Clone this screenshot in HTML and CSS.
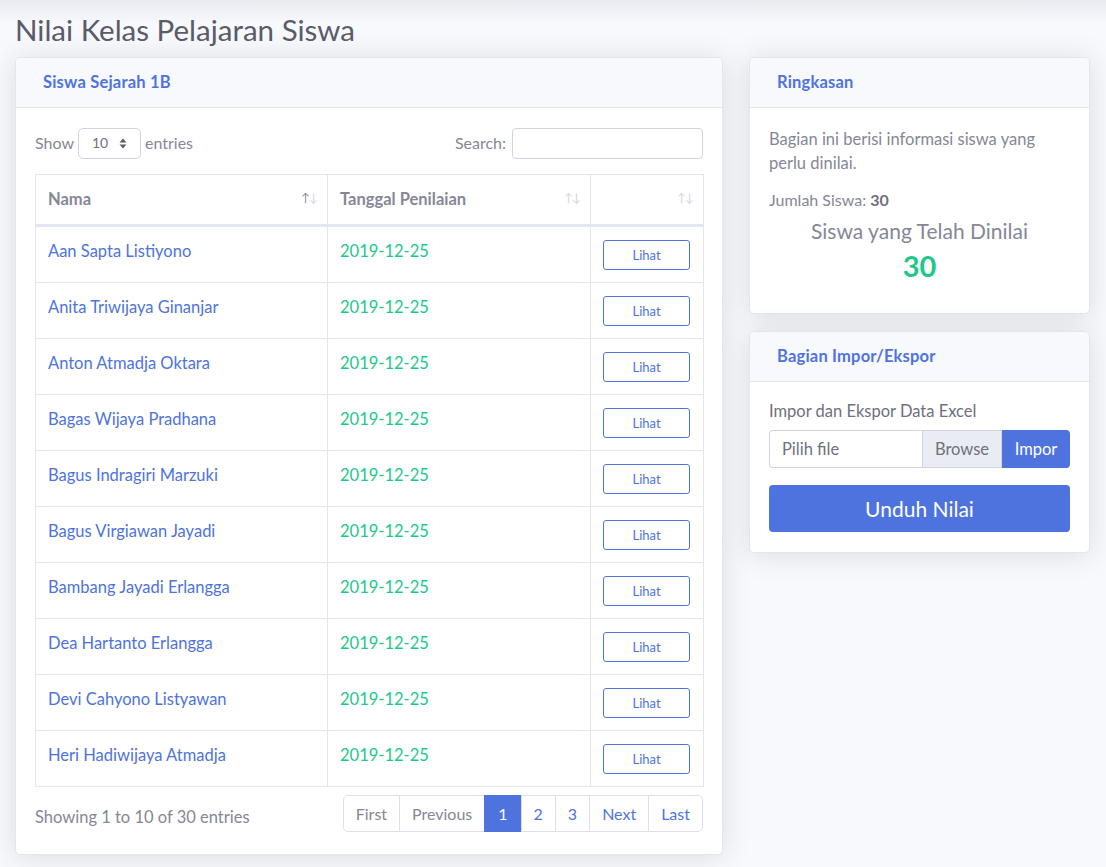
FILE: index.html
```html
<!DOCTYPE html>
<html lang="id">
<head>
<meta charset="utf-8">
<title>Nilai Kelas Pelajaran Siswa</title>
<link rel="stylesheet" href="styles.css">
</head>
<body>
<div class="page">
  <h1 class="page-title">Nilai Kelas Pelajaran Siswa</h1>
  <div class="layout">
    <div class="card">
      <div class="card-header"><h6>Siswa Sejarah 1B</h6></div>
      <div class="card-body">
        <div class="controls">
          <label class="length">Show
            <span class="select">10 <svg width="8" height="11" viewBox="0 0 8 11"><path d="M4 0.5 L7.5 4.5 H0.5 Z M4 10.5 L7.5 6.5 H0.5 Z" fill="#5a5c69"/></svg></span>
            entries</label>
          <label class="search">Search: <span class="search-input"></span></label>
        </div>
        <table class="table">
          <colgroup><col class="c1"><col class="c2"><col class="c3"></colgroup>
          <thead>
            <tr>
              <th>Nama<span class="sort"><span class="up on">↑</span><span class="dn">↓</span></span></th>
              <th>Tanggal Penilaian<span class="sort"><span class="up">↑</span><span class="dn">↓</span></span></th>
              <th><span class="sort"><span class="up">↑</span><span class="dn">↓</span></span></th>
            </tr>
          </thead>
          <tbody>
            <tr><td class="name">Aan Sapta Listiyono</td><td class="date">2019-12-25</td><td><button class="btn-lihat">Lihat</button></td></tr>
            <tr><td class="name">Anita Triwijaya Ginanjar</td><td class="date">2019-12-25</td><td><button class="btn-lihat">Lihat</button></td></tr>
            <tr><td class="name">Anton Atmadja Oktara</td><td class="date">2019-12-25</td><td><button class="btn-lihat">Lihat</button></td></tr>
            <tr><td class="name">Bagas Wijaya Pradhana</td><td class="date">2019-12-25</td><td><button class="btn-lihat">Lihat</button></td></tr>
            <tr><td class="name">Bagus Indragiri Marzuki</td><td class="date">2019-12-25</td><td><button class="btn-lihat">Lihat</button></td></tr>
            <tr><td class="name">Bagus Virgiawan Jayadi</td><td class="date">2019-12-25</td><td><button class="btn-lihat">Lihat</button></td></tr>
            <tr><td class="name">Bambang Jayadi Erlangga</td><td class="date">2019-12-25</td><td><button class="btn-lihat">Lihat</button></td></tr>
            <tr><td class="name">Dea Hartanto Erlangga</td><td class="date">2019-12-25</td><td><button class="btn-lihat">Lihat</button></td></tr>
            <tr><td class="name">Devi Cahyono Listyawan</td><td class="date">2019-12-25</td><td><button class="btn-lihat">Lihat</button></td></tr>
            <tr><td class="name">Heri Hadiwijaya Atmadja</td><td class="date">2019-12-25</td><td><button class="btn-lihat">Lihat</button></td></tr>
          </tbody>
        </table>
        <div class="table-footer">
          <div class="info">Showing 1 to 10 of 30 entries</div>
          <ul class="pagination">
            <li class="disabled">First</li>
            <li class="disabled">Previous</li>
            <li class="active">1</li>
            <li>2</li>
            <li>3</li>
            <li>Next</li>
            <li>Last</li>
          </ul>
        </div>
      </div>
    </div>

    <div class="side">
      <div class="card">
        <div class="card-header"><h6>Ringkasan</h6></div>
        <div class="card-body">
          <p class="desc">Bagian ini berisi informasi siswa yang perlu dinilai.</p>
          <p class="count">Jumlah Siswa: <b>30</b></p>
          <h5 class="graded-title">Siswa yang Telah Dinilai</h5>
          <div class="graded-num">30</div>
        </div>
      </div>
      <div class="card">
        <div class="card-header"><h6>Bagian Impor/Ekspor</h6></div>
        <div class="card-body body-import">
          <div class="import-label">Impor dan Ekspor Data Excel</div>
          <div class="input-group">
            <span class="file-name">Pilih file</span>
            <span class="file-browse">Browse</span>
            <span class="file-submit">Impor</span>
          </div>
          <button class="btn-download">Unduh Nilai</button>
        </div>
      </div>
    </div>
  </div>
</div>
</body>
</html>
```
FILE: styles.css
```css
* { box-sizing: border-box; }
html, body { margin: 0; }
body {
  font-family: Lato, "Noto Sans", sans-serif;
  font-size: 16px;
  line-height: 24px;
  color: #858796;
  background: linear-gradient(to bottom, #e9eaef 0px, #f8f9fc 24px) #f8f9fc;
  min-height: 867px;
}
.page { padding: 13px 16px 0 15px; }
.page-title {
  margin: 0 0 10px 0;
  font-size: 29.5px;
  line-height: 34px;
  font-weight: 400;
  color: #5a5c69;
}
.layout {
  display: grid;
  grid-template-columns: 708px 341px;
  gap: 26px;
  align-items: start;
}
.side { display: flex; flex-direction: column; gap: 17px; }
.card {
  background: #fff;
  border: 1px solid #e3e6f0;
  border-radius: 5px;
  box-shadow: 0 2px 28px 0 rgba(58, 59, 69, 0.15);
  overflow: hidden;
}
.card-header {
  background: #f8f9fc;
  border-bottom: 1px solid #e3e6f0;
  padding: 15px 20px 16px 27px;
}
.card-header h6 {
  margin: 0;
  font-size: 16.5px;
  line-height: 18px;
  font-weight: 700;
  color: #4e73df;
  letter-spacing: 0.2px;
}
.card-body { padding: 19px 19px 22px 19px; }

.controls {
  display: flex;
  justify-content: space-between;
  align-items: center;
  height: 32px;
}
.length, .search { display: flex; align-items: center; gap: 4px; font-size: 16px; }
.search { gap: 6px; }
.select {
  display: inline-flex;
  align-items: center;
  justify-content: space-between;
  width: 63px;
  height: 31px;
  padding: 0 13px 0 13px;
  border: 1px solid #d1d3e2;
  border-radius: 5px;
  font-size: 14px;
  color: #6e707e;
}
.search-input {
  display: inline-block;
  width: 191px;
  height: 31px;
  border: 1px solid #d1d3e2;
  border-radius: 4px;
}
.table {
  width: 100%;
  margin-top: 15px;
  border-collapse: collapse;
  table-layout: fixed;
  border: 1px solid #e3e6f0;
}
.c1 { width: 292px; }
.c2 { width: 263px; }
.c3 { width: 113px; }
.table th, .table td {
  border: 1px solid #e3e6f0;
  padding: 12px;
  vertical-align: top;
  text-align: left;
}
.table th {
  position: relative;
  font-weight: 700;
  font-size: 16.5px;
  color: #858796;
  border-bottom-width: 3px;
  padding-top: 12px;
  padding-bottom: 13px;
}
.sort {
  position: absolute;
  right: 10px;
  top: 11px;
  font-size: 12px;
  letter-spacing: -1px;
  color: #d4d6e0;
  font-weight: 400;
}
.sort .on { color: #858796; }
.table td { font-size: 16.5px; }
.table td.name { color: #4e73df; }
.table td.date { color: #1cc88a; }
.btn-lihat {
  display: block;
  width: 87px;
  height: 30px;
  margin-top: 1px;
  background: #fff;
  border: 1px solid #4e73df;
  border-radius: 3px;
  color: #4e73df;
  font-family: inherit;
  font-size: 13px;
  padding: 0;
}
.table-footer {
  display: flex;
  justify-content: space-between;
  align-items: center;
  margin-top: 8px;
}
.info { font-size: 16.5px; padding-top: 7px; }
.pagination {
  display: flex;
  list-style: none;
  margin: 0;
  padding: 0;
}
.pagination li {
  height: 37px;
  line-height: 35px;
  padding: 0 12px;
  border: 1px solid #dddfeb;
  margin-left: -1px;
  color: #4e73df;
  font-size: 16px;
  background: #fff;
}
.pagination li:first-child { border-radius: 5px 0 0 5px; margin-left: 0; }
.pagination li:last-child { border-radius: 0 5px 5px 0; }
.pagination li.disabled { color: #858796; }
.pagination li.active { background: #4e73df; border-color: #4e73df; color: #fff; padding: 0 13px; }

.desc { margin: 0 0 13px 0; font-size: 16.5px; padding-right: 8px; }
.count { margin: 0; font-size: 16px; }
.count b { color: #6e707e; }
.graded-title {
  margin: 7px 0 0 0;
  text-align: center;
  font-size: 21px;
  line-height: 24px;
  font-weight: 400;
  color: #858796;
}
.graded-num {
  margin: 6px 0 8px 0;
  text-align: center;
  font-size: 29px;
  line-height: 34px;
  font-weight: 700;
  color: #1cc88a;
}
.body-import { padding-top: 17px; padding-bottom: 20px; }
.import-label { color: #6e707e; font-size: 16.5px; margin-bottom: 7px; }
.input-group {
  display: flex;
  height: 38px;
  font-size: 16.5px;
}
.file-name {
  flex: 1;
  border: 1px solid #d1d3e2;
  border-right: none;
  border-radius: 4px 0 0 4px;
  padding: 0 12px;
  line-height: 36px;
  color: #6e707e;
}
.file-browse {
  width: 80px;
  border: 1px solid #d1d3e2;
  background: #eaecf4;
  color: #6e707e;
  line-height: 36px;
  text-align: center;
}
.file-submit {
  width: 68px;
  background: #4e73df;
  color: #fff;
  line-height: 38px;
  text-align: center;
  border-radius: 0 4px 4px 0;
}
.btn-download {
  display: block;
  width: 100%;
  height: 47px;
  margin-top: 17px;
  border: none;
  border-radius: 4px;
  background: #4e73df;
  color: #fff;
  font-family: inherit;
  font-size: 21px;
}
```
